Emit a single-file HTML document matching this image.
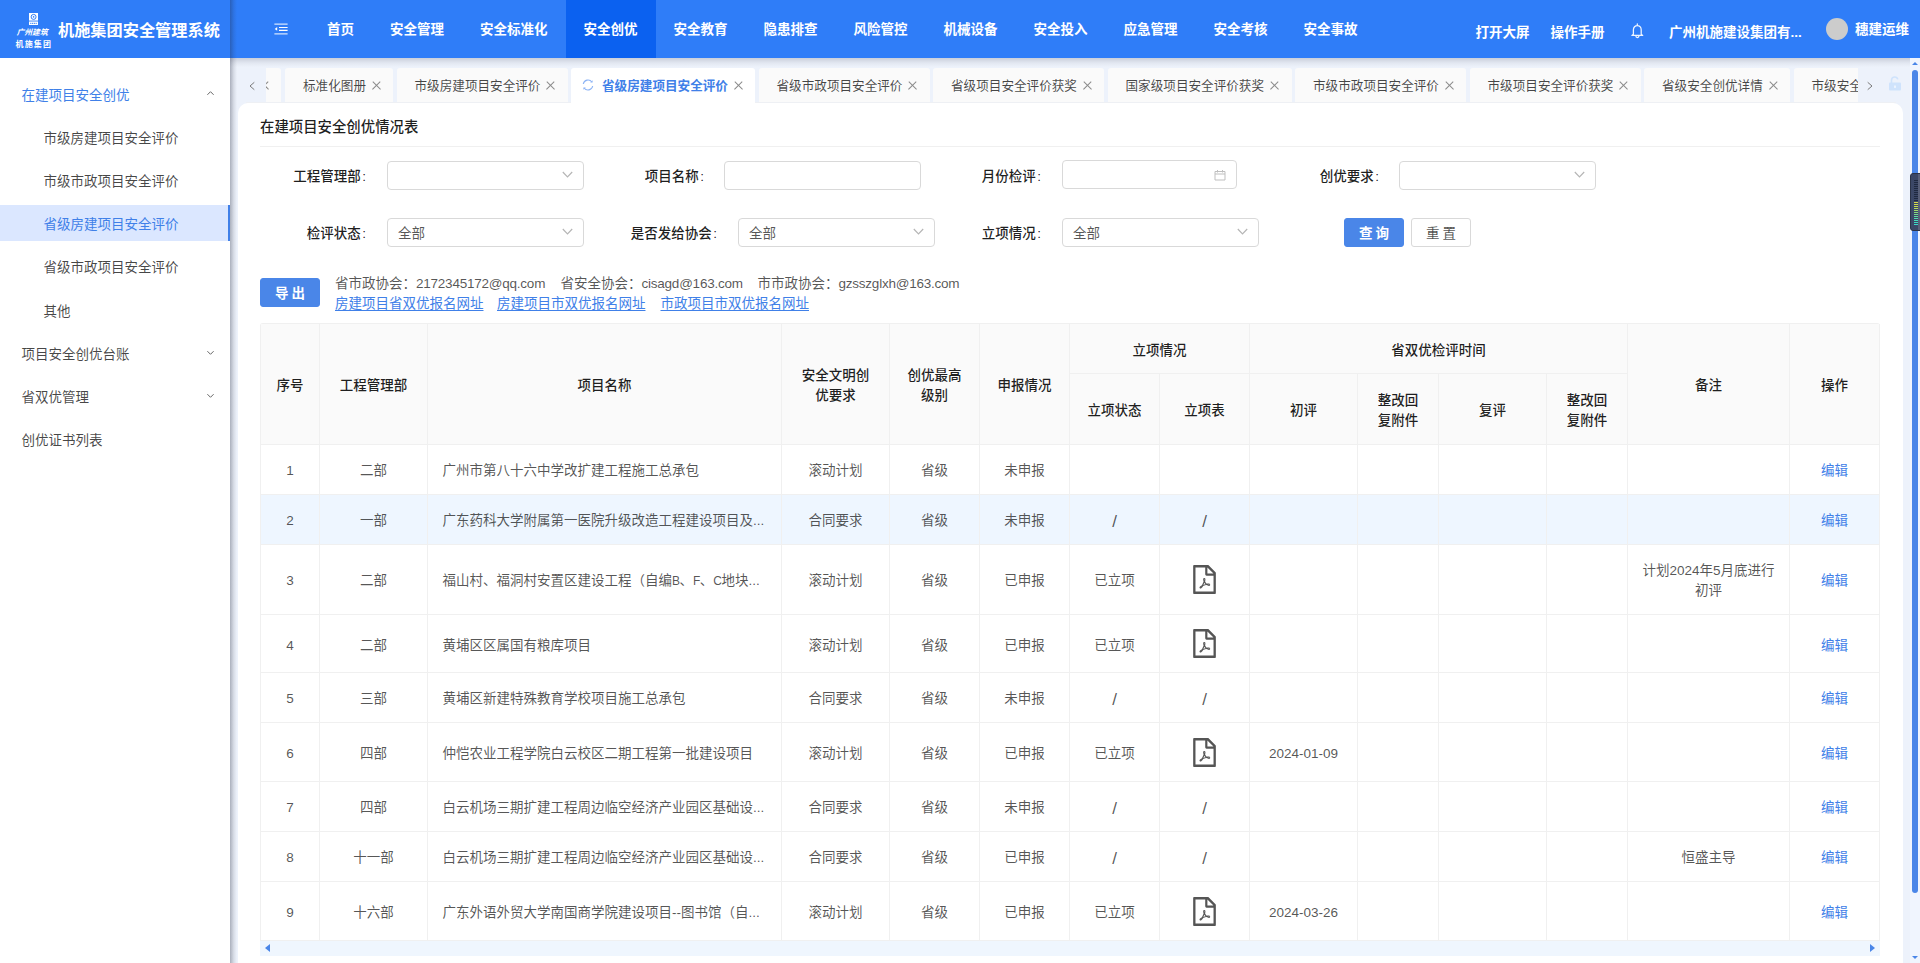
<!DOCTYPE html>
<html lang="zh-CN">
<head>
<meta charset="utf-8">
<title>机施集团安全管理系统</title>
<style>
*{box-sizing:border-box;margin:0;padding:0}
html,body{width:1920px;height:963px;overflow:hidden}
body{font-family:"Liberation Sans","Noto Sans CJK SC",sans-serif;font-size:13.5px;line-height:1.5715;color:rgba(0,0,0,.65);background:#edf2fb;position:relative}
a{color:#4080e8}
.abs{position:absolute}
/* ---------- header ---------- */
#header{position:absolute;left:0;top:0;width:1920px;height:58px;background:#2f7df8;color:#fff;z-index:5}
#hshadow{position:absolute;left:230px;top:58px;width:1690px;height:9px;background:linear-gradient(to bottom,rgba(50,55,80,.19),rgba(50,55,80,.06) 55%,rgba(50,55,80,0));z-index:4}
#logo{position:absolute;left:0;top:0;width:230px;height:58px}
#logo .l1{position:absolute;left:16.500px;top:27px;font-size:7.800px;line-height:12px;font-weight:700;font-style:italic;white-space:nowrap;letter-spacing:0}
#logo .l2{position:absolute;left:15.500px;top:38.500px;font-size:8px;line-height:12px;font-weight:700;white-space:nowrap;letter-spacing:1.150px}
#logo .title{position:absolute;left:58px;top:0;line-height:60px;font-size:16.2px;font-weight:700;white-space:nowrap}
#sideshadow{position:absolute;left:230px;top:0;width:7px;height:963px;background:linear-gradient(to right,rgba(30,35,55,.32),rgba(30,35,55,.10) 55%,rgba(30,35,55,0));z-index:6}
#nav{position:absolute;left:309px;top:0;height:58px;display:flex;font-size:13.5px;font-weight:700}
#nav div{height:58px;line-height:60px;padding:0 18px;white-space:nowrap}
#nav div.on{background:#0b61f0}
.hr{position:absolute;font-size:13.5px;font-weight:700;white-space:nowrap;line-height:20px}
/* ---------- sidebar ---------- */
#side{position:absolute;left:0;top:58px;width:230px;height:905px;background:#fff;z-index:3}
#side .mi{position:absolute;left:0;width:230px;height:36px;line-height:40px;font-size:13.5px;color:rgba(0,0,0,.72);white-space:nowrap}
#side .mi.l1{padding-left:21.500px}
#side .mi.l2{padding-left:43.500px}
#side .mi.blue{color:#4080e8}
#side .mi.act{background:#dbe7ff;color:#4080e8;border-right:2px solid #4080e8}
#side svg{position:absolute;left:205.500px;top:13px}
</style>
</head>
<body>
<div id="header">
  <div id="logo">
    <svg class="abs" style="left:29px;top:12.800px" width="9.200" height="12.200" viewBox="0 0 9.200 12.200"><rect x="0" y="0" width="9.200" height="7.600" fill="#fff"/><circle cx="4.600" cy="3.900" r="2.500" fill="none" stroke="#2f7df8" stroke-width="1"/><circle cx="4.600" cy="3.900" r=".8" fill="#2f7df8"/><rect x="0" y="8.500" width="9.200" height="3.700" fill="#fff"/><path d="M1.200 10.350h6.800" stroke="#2f7df8" stroke-width="1" stroke-dasharray="1.200 .6"/></svg>
    <div class="l1">广州建筑</div>
    <div class="l2">机施集团</div>
    <div class="title">机施集团安全管理系统</div>
  </div>
  <svg class="abs" style="left:274px;top:23px" width="14" height="12" viewBox="0 0 14 12"><path d="M.4 1.100h13.200M.4 10.900h13.200" stroke="#fff" stroke-width="1.100" fill="none" opacity=".8"/><path d="M5 4.500h8.600M5 7.400h8.600" stroke="#fff" stroke-width="1.150" fill="none"/><path d="M.7 5.950l2.500-1.900v3.800z" fill="#fff"/></svg>
  <div id="nav">
    <div>首页</div><div>安全管理</div><div>安全标准化</div><div class="on">安全创优</div><div>安全教育</div><div>隐患排查</div><div>风险管控</div><div>机械设备</div><div>安全投入</div><div>应急管理</div><div>安全考核</div><div>安全事故</div>
  </div>
  <div class="hr" style="left:1475.500px;top:23px">打开大屏</div>
  <div class="hr" style="left:1550.500px;top:23px">操作手册</div>
  <svg class="abs" style="left:1631px;top:23px" width="13" height="16" viewBox="0 0 13 16"><path d="M6.300 .8v1.400M2.400 12.200V6.700a3.900 4.200 0 0 1 7.800 0v5.500M.9 12.400h10.800l-1.500-1.200M.9 12.400l1.500-1.200M4.900 13a1.500 1.500 0 0 0 3 0" stroke="#fff" stroke-width="1.250" fill="none" stroke-linecap="round" stroke-linejoin="round" opacity=".92"/></svg>
  <div class="hr" style="left:1669px;top:23px">广州机施建设集团有...</div>
  <div class="abs" style="left:1825.500px;top:18px;width:22px;height:22px;border-radius:50%;background:#ccc"></div>
  <div class="hr" style="left:1855px;top:20px">穗建运维</div>
</div>
<div id="hshadow"></div>
<div id="sideshadow"></div>

<div id="side">
  <div class="mi l1 blue" style="top:18px">在建项目安全创优<svg width="9" height="9" viewBox="0 0 9 9"><path d="M1.400 5.800l3.100-3.100 3.100 3.100" stroke="#666" stroke-width="1" fill="none"/></svg></div>
  <div class="mi l2" style="top:61px">市级房建项目安全评价</div>
  <div class="mi l2" style="top:104px">市级市政项目安全评价</div>
  <div class="mi l2 act" style="top:147px">省级房建项目安全评价</div>
  <div class="mi l2" style="top:190px">省级市政项目安全评价</div>
  <div class="mi l2" style="top:234px">其他</div>
  <div class="mi l1" style="top:277px">项目安全创优台账<svg width="9" height="9" viewBox="0 0 9 9"><path d="M1.400 3.200l3.100 3.100 3.100-3.100" stroke="#666" stroke-width="1" fill="none"/></svg></div>
  <div class="mi l1" style="top:320px">省双优管理<svg width="9" height="9" viewBox="0 0 9 9"><path d="M1.400 3.200l3.100 3.100 3.100-3.100" stroke="#666" stroke-width="1" fill="none"/></svg></div>
  <div class="mi l1" style="top:363px">创优证书列表</div>
</div>


<style>
/* ---------- tabs ---------- */
#tabs{position:absolute;left:266px;top:68px;width:1592px;height:35px;overflow:hidden;z-index:2}
.tab{position:absolute;top:0;height:34px;background:#fafafa;border-radius:3px 3px 0 0;font-size:12.6px;line-height:36px;color:rgba(0,0,0,.72);white-space:nowrap;padding-left:18px}
.tab.on{height:35px;background:#fff;color:#4080e8;font-weight:700;padding-left:31px}
.tab i{position:absolute;right:13px;top:13.500px;width:8px;height:8px}
.tab i:before,.tab i:after{content:"";position:absolute;left:3.500px;top:-1.500px;width:1px;height:10.500px;background:#8a8a8a;transform:rotate(45deg)}
.tab i:after{transform:rotate(-45deg)}
/* ---------- card ---------- */
#card{position:absolute;left:238px;top:102.500px;width:1665px;height:880px;background:#fff;border-radius:10px}
#ptitle{font-weight:500;position:absolute;left:260px;top:113.500px;font-size:14.4px;line-height:26px;color:rgba(0,0,0,.88);white-space:nowrap}
#pline{position:absolute;left:260px;top:146px;width:1620px;height:1px;background:#f0f0f0}
.lb{position:absolute;font-weight:500;font-size:13.5px;line-height:31px;height:29px;color:rgba(0,0,0,.88);white-space:nowrap;text-align:right;width:120px}
.lb b{font-weight:400;margin-left:1.500px}
.ip{position:absolute;height:29px;border:1px solid #d9d9d9;border-radius:4px;background:#fff;font-size:13.5px;line-height:29px;padding-left:10px;color:rgba(0,0,0,.68)}
.ip svg{position:absolute;right:10.500px;top:7px}
.btn{position:absolute;height:29px;width:60px;border-radius:3px;font-size:13.5px;line-height:29px;text-align:center;border:1px solid #d9d9d9;color:rgba(0,0,0,.7);background:#fff;letter-spacing:3px;padding-left:3px;white-space:nowrap}
.btn.pri{background:#4a86e8;border-color:#4a86e8;color:#fff;font-weight:700}
.inf{position:absolute;font-size:13.5px;line-height:20px;white-space:nowrap;color:rgba(0,0,0,.68)}
.ls{letter-spacing:-.23px}
.lk{position:absolute;font-size:13.5px;line-height:20px;white-space:nowrap;color:#4080e8;text-decoration:underline;text-underline-offset:2px}
</style>
<svg class="abs" style="left:248px;top:81px" width="8" height="10" viewBox="0 0 8 10"><path d="M6.300 1.300L2 5l4.300 3.700" stroke="#7a7a7a" stroke-width="1" fill="none"/></svg>
<div id="tabs">
  <div class="tab" style="left:-80px;width:95px"><i style="right:13px"></i></div>
  <div class="tab" style="left:19px;width:108px">标准化图册<i></i></div>
  <div class="tab" style="left:130.500px;width:171px">市级房建项目安全评价<i></i></div>
  <div class="tab on" style="left:305px;width:184px"><svg class="abs" style="left:11px;top:11px" width="12" height="12" viewBox="0 0 12 12"><path d="M1.300 5a4.800 4.800 0 0 1 8.600-2M10.700 7a4.800 4.800 0 0 1-8.600 2" stroke="#8db4f5" stroke-width="1.100" fill="none"/><path d="M10.600 1.200v2.400H8.200zM1.400 10.800V8.400h2.400z" fill="#8db4f5"/></svg>省级房建项目安全评价<i></i></div>
  <div class="tab" style="left:492.500px;width:171px">省级市政项目安全评价<i></i></div>
  <div class="tab" style="left:667px;width:171px">省级项目安全评价获奖<i></i></div>
  <div class="tab" style="left:841.500px;width:184px">国家级项目安全评价获奖<i></i></div>
  <div class="tab" style="left:1029px;width:171px">市级市政项目安全评价<i></i></div>
  <div class="tab" style="left:1203.500px;width:171px">市级项目安全评价获奖<i></i></div>
  <div class="tab" style="left:1378px;width:146px">省级安全创优详情<i></i></div>
  <div class="tab" style="left:1527.500px;width:171px">市级安全创优详情<i></i></div>
</div>
<svg class="abs" style="left:1866px;top:81px" width="8" height="10" viewBox="0 0 8 10"><path d="M1.700 1.300L6 5 1.700 8.700" stroke="#7a7a7a" stroke-width="1" fill="none"/></svg>
<svg class="abs" style="left:1888px;top:76px" width="14" height="15" viewBox="0 0 14 15"><path d="M3.500 7V4.200a3.200 3.200 0 0 1 6.300-.8" stroke="#cfe3fc" stroke-width="1.600" fill="none"/><rect x="1" y="6.500" width="12" height="8" rx="1" fill="#cfe3fc"/><rect x="6.400" y="9.500" width="1.200" height="2.400" fill="#fff"/></svg>

<div class="abs" style="left:246px;top:102px;width:1650px;height:1px;background:#eef0f4;z-index:1"></div>
<div id="card"></div>
<div id="ptitle">在建项目安全创优情况表</div>
<div id="pline"></div>

<div class="lb" style="left:246px;top:161px">工程管理部<b>:</b></div>
<div class="ip" style="left:387px;top:161px;width:197px"><svg width="11" height="11" viewBox="0 0 11 11"><path d="M.8 3L5.500 8l4.700-5" stroke="#b5b5b5" stroke-width="1.150" fill="none"/></svg></div>
<div class="lb" style="left:584px;top:161px">项目名称<b>:</b></div>
<div class="ip" style="left:724px;top:161px;width:197px"></div>
<div class="lb" style="left:921px;top:161px">月份检评<b>:</b></div>
<div class="ip" style="left:1062px;top:160px;width:175px"><svg width="12" height="12" viewBox="0 0 12 12" style="top:8px"><path d="M1 2.500h10v8.500H1zM1 5h10M3.500 1v2.500M8.500 1v2.500" stroke="#bfbfbf" stroke-width="1" fill="none"/></svg></div>
<div class="lb" style="left:1259px;top:161px">创优要求<b>:</b></div>
<div class="ip" style="left:1399px;top:161px;width:197px"><svg width="11" height="11" viewBox="0 0 11 11"><path d="M.8 3L5.500 8l4.700-5" stroke="#b5b5b5" stroke-width="1.150" fill="none"/></svg></div>

<div class="lb" style="left:246px;top:218px">检评状态<b>:</b></div>
<div class="ip" style="left:387px;top:218px;width:197px">全部<svg width="11" height="11" viewBox="0 0 11 11"><path d="M.8 3L5.500 8l4.700-5" stroke="#b5b5b5" stroke-width="1.150" fill="none"/></svg></div>
<div class="lb" style="left:597px;top:218px">是否发给协会<b>:</b></div>
<div class="ip" style="left:738px;top:218px;width:197px">全部<svg width="11" height="11" viewBox="0 0 11 11"><path d="M.8 3L5.500 8l4.700-5" stroke="#b5b5b5" stroke-width="1.150" fill="none"/></svg></div>
<div class="lb" style="left:921px;top:218px">立项情况<b>:</b></div>
<div class="ip" style="left:1062px;top:218px;width:197px">全部<svg width="11" height="11" viewBox="0 0 11 11"><path d="M.8 3L5.500 8l4.700-5" stroke="#b5b5b5" stroke-width="1.150" fill="none"/></svg></div>
<div class="btn pri" style="left:1344px;top:218px">查询</div>
<div class="btn" style="left:1411px;top:218px">重置</div>

<div class="btn pri" style="left:260px;top:278px">导出</div>
<div class="inf" style="left:335px;top:274px">省市政协会：<span class="ls">2172345172@qq.com</span></div>
<div class="inf" style="left:560.500px;top:274px">省安全协会：<span class="ls">cisagd@163.com</span></div>
<div class="inf" style="left:757.500px;top:274px">市市政协会：<span class="ls">gzsszglxh@163.com</span></div>
<div class="lk" style="left:335px;top:294px">房建项目省双优报名网址</div>
<div class="lk" style="left:497px;top:294px">房建项目市双优报名网址</div>
<div class="lk" style="left:660.500px;top:294px">市政项目市双优报名网址</div>

<style>
#tbl{position:absolute;left:260px;top:323px;width:1620px;border-collapse:separate;border-spacing:0;table-layout:fixed;border-left:1px solid #f0f0f0;border-top:1px solid #f0f0f0;font-size:13.5px;line-height:20px;border-radius:3px 3px 0 0}
#tbl th,#tbl td{border-right:1px solid #f0f0f0;border-bottom:1px solid #f0f0f0;text-align:center;padding:2px 6px 0;vertical-align:middle;overflow:hidden}
#tbl th{background:#fafafa;color:rgba(0,0,0,.88);font-weight:500;padding-top:4px}
#tbl td{color:rgba(0,0,0,.68);background:#fff}
#tbl td.nm{text-align:left;padding-left:14.400px;white-space:nowrap}
#tbl tr.hl td{background:#eef6ff}
#tbl tr.r2 td{padding-top:4px}
#tbl tr.r2 .pdf{margin-top:-4px}
#tbl .sl{font-size:17px;line-height:20px;position:relative;top:1.5px}
#tbl .lt{font-size:12px;letter-spacing:-.45px}
#tbl td a{text-decoration:none;color:#4080e8}
#tbl .pdf{display:block;margin:-2px auto 0}
#hscroll{position:absolute;left:260px;top:941px;width:1620px;height:15px;background:#eff6fe}
#hscroll:before{content:"";position:absolute;left:5px;top:2.700px;border:4.800px solid transparent;border-right:5.300px solid #4a86e8;border-left:0}
#hscroll:after{content:"";position:absolute;right:5px;top:2.700px;border:4.800px solid transparent;border-left:5.300px solid #4a86e8;border-right:0}
#cardbot{position:absolute;left:238px;top:956px;width:1665px;height:8px;background:#fff}
#vtrack{position:absolute;left:1910px;top:58px;width:10px;height:905px;background:#f0f5fe;z-index:4}
#vthumb{position:absolute;left:1912px;top:70px;width:6px;height:823px;border-radius:3px;background:#4a86e8;z-index:4}
.varr{position:absolute;left:1911.800px;width:0;height:0;border:3.200px solid transparent;z-index:4}
#widget{position:absolute;left:1910px;top:173px;width:14px;height:58px;border-radius:3px;background:#3b4766;border:1px solid #2b3347;z-index:7;overflow:hidden}
#widget u{position:absolute;left:7px;top:0;width:5px;height:58px;background:#596079}
#widget i{position:absolute;left:3px;width:4px;height:1.200px}
</style>
<table id="tbl">
<colgroup><col style="width:59px"><col style="width:108px"><col style="width:354px"><col style="width:108px"><col style="width:90px"><col style="width:90px"><col style="width:90px"><col style="width:90px"><col style="width:108px"><col style="width:81px"><col style="width:108px"><col style="width:81px"><col style="width:162px"><col style="width:90px"></colgroup>
<tr style="height:50px"><th rowspan="2">序号</th><th rowspan="2">工程管理部</th><th rowspan="2">项目名称</th><th rowspan="2">安全文明创<br>优要求</th><th rowspan="2">创优最高<br>级别</th><th rowspan="2">申报情况</th><th colspan="2">立项情况</th><th colspan="4">省双优检评时间</th><th rowspan="2">备注</th><th rowspan="2">操作</th></tr>
<tr style="height:71px"><th>立项状态</th><th>立项表</th><th>初评</th><th>整改回<br>复附件</th><th>复评</th><th>整改回<br>复附件</th></tr>
<tr style="height:50px"><td>1</td><td>二部</td><td class="nm">广州市第八十六中学改扩建工程施工总承包</td><td>滚动计划</td><td>省级</td><td>未申报</td><td></td><td></td><td></td><td></td><td></td><td></td><td></td><td><a>编辑</a></td></tr>
<tr style="height:50px" class=hl><td>2</td><td>一部</td><td class="nm">广东药科大学附属第一医院升级改造工程建设项目及...</td><td>合同要求</td><td>省级</td><td>未申报</td><td><span class="sl">/</span></td><td><span class="sl">/</span></td><td></td><td></td><td></td><td></td><td></td><td><a>编辑</a></td></tr>
<tr style="height:70px"><td>3</td><td>二部</td><td class="nm">福山村、福洞村安置区建设工程（自编<span class="lt">B</span>、<span class="lt">F</span>、<span class="lt">C</span>地块...</td><td>滚动计划</td><td>省级</td><td>已申报</td><td>已立项</td><td><svg class="pdf" width="33" height="33" viewBox="0 0 1024 1024"><path fill="#555" d="M531.300 574.400l.300-1.400c5.800-23.900 13.100-53.700 7.400-80.700-3.800-21.300-19.500-29.600-32.900-30.200-15.800-.7-29.900 8.300-33.400 21.400-6.600 24-.7 56.800 10.100 98.600-13.600 32.400-35.300 79.500-51.200 107.500-29.600 15.300-69.300 38.900-75.200 68.700-1.200 5.500.2 12.500 3.500 18.800 3.700 7 9.600 12.400 16.500 15 3 1.100 6.600 2 10.800 2 17.600 0 46.100-14.200 84.100-79.400 5.800-1.900 11.800-3.900 17.600-5.900 27.200-9.200 55.400-18.800 80.900-23.100 28.200 15.100 60.300 24.800 82.100 24.800 21.600 0 30.100-12.800 33.300-20.500 5.600-13.500 2.900-30.500-6.200-39.600-13.200-13-45.300-16.400-95.300-10.200-24.600-15-40.700-35.400-52.400-65.800zM421.600 726.300c-13.900 20.200-24.400 30.300-30.100 34.700 6.700-12.300 19.800-25.300 30.100-34.700zm87.600-235.500c5.200 8.900 4.500 35.800.5 49.400-4.900-19.900-5.600-48.100-2.700-51.400.8.100 1.500.7 2.200 2zm-1.600 120.500c10.700 18.500 24.200 34.400 39.100 46.200-21.600 4.900-41.300 13-58.900 20.200-4.200 1.700-8.300 3.400-12.300 5 13.300-24.100 24.400-51.400 32.100-71.400zm155.600 65.500c.1.200.2.500-.4.900h-.2l-.2.300c-.8.500-9 5.300-44.300-8.600 40.600-1.900 45 7.300 45.100 7.400zM854.600 288.600L639.400 73.400c-6-6-14.100-9.400-22.600-9.400H192c-17.700 0-32 14.300-32 32v832c0 17.700 14.300 32 32 32h640c17.700 0 32-14.300 32-32V311.300c0-8.500-3.400-16.700-9.400-22.700zM790.200 326H602V137.800L790.200 326zm1.800 562H232V136h302v216a42 42 0 0 0 42 42h216v494z"/></svg></td><td></td><td></td><td></td><td></td><td>计划2024年5月底进行<br>初评</td><td><a>编辑</a></td></tr>
<tr class="r2" style="height:58px"><td>4</td><td>二部</td><td class="nm">黄埔区区属国有粮库项目</td><td>滚动计划</td><td>省级</td><td>已申报</td><td>已立项</td><td><svg class="pdf" width="33" height="33" viewBox="0 0 1024 1024"><path fill="#555" d="M531.300 574.400l.300-1.400c5.800-23.900 13.100-53.700 7.400-80.700-3.800-21.300-19.500-29.600-32.900-30.200-15.800-.7-29.900 8.300-33.400 21.400-6.600 24-.7 56.800 10.100 98.600-13.600 32.400-35.300 79.500-51.200 107.500-29.600 15.300-69.300 38.900-75.200 68.700-1.200 5.500.2 12.500 3.500 18.800 3.700 7 9.600 12.400 16.500 15 3 1.100 6.600 2 10.800 2 17.600 0 46.100-14.200 84.100-79.400 5.800-1.900 11.800-3.900 17.600-5.900 27.200-9.200 55.400-18.800 80.900-23.100 28.200 15.100 60.300 24.800 82.100 24.800 21.600 0 30.100-12.800 33.300-20.500 5.600-13.500 2.900-30.500-6.200-39.600-13.200-13-45.300-16.400-95.300-10.200-24.600-15-40.700-35.400-52.400-65.800zM421.600 726.300c-13.900 20.200-24.400 30.300-30.100 34.700 6.700-12.300 19.800-25.300 30.100-34.700zm87.600-235.500c5.200 8.900 4.500 35.800.5 49.400-4.900-19.900-5.600-48.100-2.700-51.400.8.100 1.500.7 2.200 2zm-1.600 120.500c10.700 18.500 24.200 34.400 39.100 46.200-21.600 4.900-41.300 13-58.900 20.200-4.200 1.700-8.300 3.400-12.300 5 13.300-24.100 24.400-51.400 32.100-71.400zm155.600 65.500c.1.200.2.500-.4.900h-.2l-.2.300c-.8.500-9 5.300-44.300-8.600 40.600-1.900 45 7.300 45.100 7.400zM854.600 288.600L639.400 73.400c-6-6-14.100-9.400-22.600-9.400H192c-17.700 0-32 14.300-32 32v832c0 17.700 14.300 32 32 32h640c17.700 0 32-14.300 32-32V311.300c0-8.500-3.400-16.700-9.400-22.700zM790.200 326H602V137.800L790.200 326zm1.800 562H232V136h302v216a42 42 0 0 0 42 42h216v494z"/></svg></td><td></td><td></td><td></td><td></td><td></td><td><a>编辑</a></td></tr>
<tr style="height:50px"><td>5</td><td>三部</td><td class="nm">黄埔区新建特殊教育学校项目施工总承包</td><td>合同要求</td><td>省级</td><td>未申报</td><td><span class="sl">/</span></td><td><span class="sl">/</span></td><td></td><td></td><td></td><td></td><td></td><td><a>编辑</a></td></tr>
<tr class="r2" style="height:59px"><td>6</td><td>四部</td><td class="nm">仲恺农业工程学院白云校区二期工程第一批建设项目</td><td>滚动计划</td><td>省级</td><td>已申报</td><td>已立项</td><td><svg class="pdf" width="33" height="33" viewBox="0 0 1024 1024"><path fill="#555" d="M531.300 574.400l.300-1.400c5.800-23.900 13.100-53.700 7.400-80.700-3.800-21.300-19.500-29.600-32.900-30.200-15.800-.7-29.900 8.300-33.400 21.400-6.600 24-.7 56.800 10.100 98.600-13.600 32.400-35.300 79.500-51.200 107.500-29.600 15.300-69.300 38.900-75.200 68.700-1.200 5.500.2 12.500 3.500 18.800 3.700 7 9.600 12.400 16.500 15 3 1.100 6.600 2 10.800 2 17.600 0 46.100-14.200 84.100-79.400 5.800-1.900 11.800-3.900 17.600-5.900 27.200-9.200 55.400-18.800 80.900-23.100 28.200 15.100 60.300 24.800 82.100 24.800 21.600 0 30.100-12.800 33.300-20.500 5.600-13.500 2.900-30.500-6.200-39.600-13.200-13-45.300-16.400-95.300-10.200-24.600-15-40.700-35.400-52.400-65.800zM421.600 726.300c-13.900 20.200-24.400 30.300-30.100 34.700 6.700-12.300 19.800-25.300 30.100-34.700zm87.600-235.500c5.200 8.900 4.500 35.800.5 49.400-4.900-19.900-5.600-48.100-2.700-51.400.8.100 1.500.7 2.200 2zm-1.600 120.500c10.700 18.500 24.200 34.400 39.100 46.200-21.600 4.900-41.300 13-58.900 20.200-4.200 1.700-8.300 3.400-12.300 5 13.300-24.100 24.400-51.400 32.100-71.400zm155.600 65.500c.1.200.2.500-.4.900h-.2l-.2.300c-.8.500-9 5.300-44.300-8.600 40.600-1.900 45 7.300 45.100 7.400zM854.600 288.600L639.400 73.400c-6-6-14.100-9.400-22.600-9.400H192c-17.700 0-32 14.300-32 32v832c0 17.700 14.300 32 32 32h640c17.700 0 32-14.300 32-32V311.300c0-8.500-3.400-16.700-9.400-22.700zM790.200 326H602V137.800L790.200 326zm1.800 562H232V136h302v216a42 42 0 0 0 42 42h216v494z"/></svg></td><td>2024-01-09</td><td></td><td></td><td></td><td></td><td><a>编辑</a></td></tr>
<tr style="height:50px"><td>7</td><td>四部</td><td class="nm">白云机场三期扩建工程周边临空经济产业园区基础设...</td><td>合同要求</td><td>省级</td><td>未申报</td><td><span class="sl">/</span></td><td><span class="sl">/</span></td><td></td><td></td><td></td><td></td><td></td><td><a>编辑</a></td></tr>
<tr style="height:50px"><td>8</td><td>十一部</td><td class="nm">白云机场三期扩建工程周边临空经济产业园区基础设...</td><td>合同要求</td><td>省级</td><td>已申报</td><td><span class="sl">/</span></td><td><span class="sl">/</span></td><td></td><td></td><td></td><td></td><td>恒盛主导</td><td><a>编辑</a></td></tr>
<tr class="r2" style="height:59px"><td>9</td><td>十六部</td><td class="nm">广东外语外贸大学南国商学院建设项目--图书馆（自...</td><td>滚动计划</td><td>省级</td><td>已申报</td><td>已立项</td><td><svg class="pdf" width="33" height="33" viewBox="0 0 1024 1024"><path fill="#555" d="M531.300 574.400l.300-1.400c5.800-23.900 13.100-53.700 7.400-80.700-3.800-21.300-19.500-29.600-32.900-30.200-15.800-.7-29.900 8.300-33.400 21.400-6.600 24-.7 56.800 10.100 98.600-13.600 32.400-35.300 79.500-51.200 107.500-29.600 15.300-69.300 38.900-75.200 68.700-1.200 5.500.2 12.500 3.500 18.800 3.700 7 9.600 12.400 16.500 15 3 1.100 6.600 2 10.800 2 17.600 0 46.100-14.200 84.100-79.400 5.800-1.900 11.800-3.900 17.600-5.900 27.200-9.200 55.400-18.800 80.900-23.100 28.200 15.100 60.300 24.800 82.100 24.800 21.600 0 30.100-12.800 33.300-20.500 5.600-13.500 2.900-30.500-6.200-39.600-13.200-13-45.300-16.400-95.300-10.200-24.600-15-40.700-35.400-52.400-65.800zM421.600 726.300c-13.900 20.200-24.400 30.300-30.100 34.700 6.700-12.300 19.800-25.300 30.100-34.700zm87.600-235.500c5.200 8.900 4.500 35.800.5 49.400-4.900-19.900-5.600-48.100-2.700-51.400.8.100 1.500.7 2.200 2zm-1.600 120.500c10.700 18.500 24.200 34.400 39.100 46.200-21.600 4.900-41.300 13-58.900 20.200-4.200 1.700-8.300 3.400-12.300 5 13.300-24.100 24.400-51.400 32.100-71.400zm155.600 65.500c.1.200.2.500-.4.900h-.2l-.2.300c-.8.500-9 5.300-44.300-8.600 40.600-1.900 45 7.300 45.100 7.400zM854.600 288.600L639.400 73.400c-6-6-14.100-9.400-22.600-9.400H192c-17.700 0-32 14.300-32 32v832c0 17.700 14.300 32 32 32h640c17.700 0 32-14.300 32-32V311.300c0-8.500-3.400-16.700-9.400-22.700zM790.200 326H602V137.800L790.200 326zm1.800 562H232V136h302v216a42 42 0 0 0 42 42h216v494z"/></svg></td><td>2024-03-26</td><td></td><td></td><td></td><td></td><td><a>编辑</a></td></tr>
</table>
<div id="hscroll"></div>
<div id="cardbot"></div>
<div id="vtrack"></div><div id="vthumb"></div><div class="varr" style="top:58.500px;border-bottom:3.500px solid #4a86e8"></div><div class="varr" style="top:956px;border-top:3.700px solid #4a86e8"></div>
<div id="widget"><u></u><i style="top:6.00px;background:#1f2940"></i><i style="top:7.99px;background:#1f2940"></i><i style="top:9.98px;background:#1f2940"></i><i style="top:11.97px;background:#1f2940"></i><i style="top:13.96px;background:#1f2940"></i><i style="top:15.95px;background:#1f2940"></i><i style="top:17.94px;background:#1f2940"></i><i style="top:19.93px;background:#1f2940"></i><i style="top:21.92px;background:#1f2940"></i><i style="top:23.91px;background:#1f2940"></i><i style="top:25.90px;background:#1f2940"></i><i style="top:27.89px;background:#d8d84a"></i><i style="top:29.88px;background:#d2dc4c"></i><i style="top:31.87px;background:#c6dc52"></i><i style="top:33.86px;background:#b4dc5c"></i><i style="top:35.85px;background:#a0dc6a"></i><i style="top:37.84px;background:#88dc7c"></i><i style="top:39.83px;background:#74dc8e"></i><i style="top:41.82px;background:#62dca0"></i><i style="top:43.81px;background:#52dcae"></i><i style="top:45.80px;background:#46dcba"></i><i style="top:47.79px;background:#3edac2"></i><i style="top:49.78px;background:#3ad8c8"></i></div>


<!--MAIN-->
</body>
</html>
